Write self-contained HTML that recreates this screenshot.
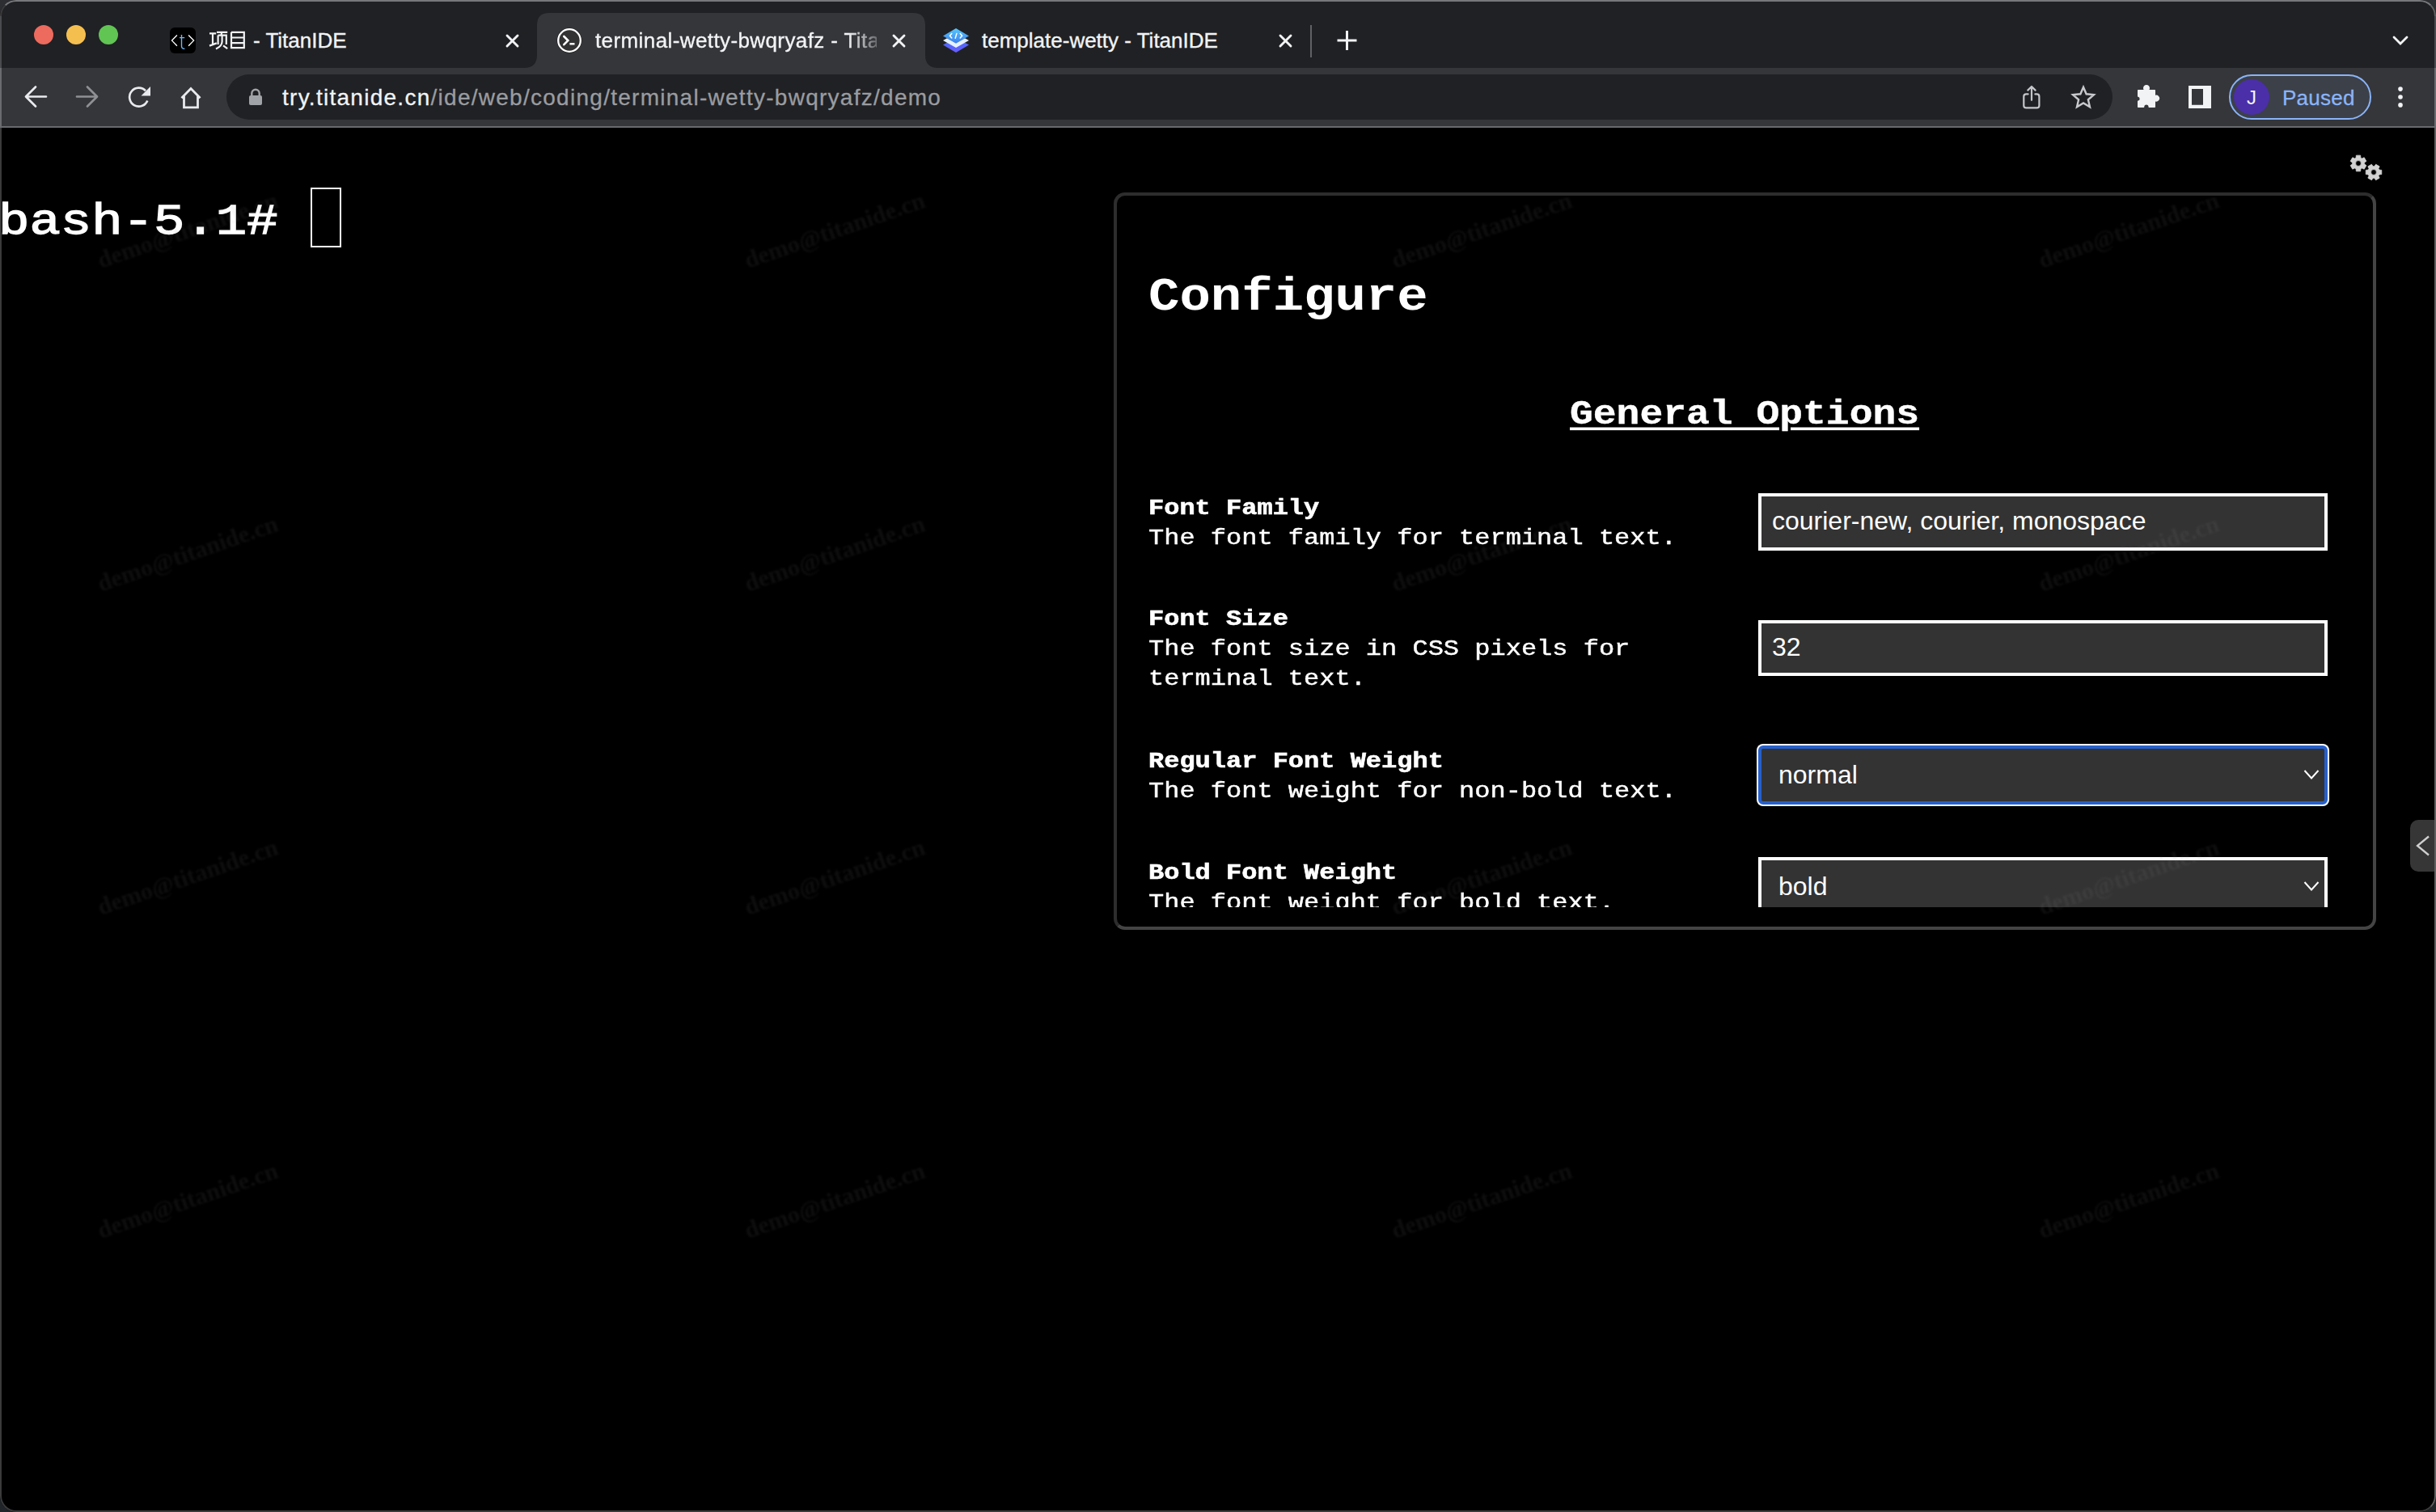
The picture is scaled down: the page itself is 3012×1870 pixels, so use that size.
<!DOCTYPE html>
<html><head><meta charset="utf-8">
<style>
*{box-sizing:border-box}
html,body{margin:0;padding:0;width:3012px;height:1870px;overflow:hidden;background:linear-gradient(#2d2e32 0,#2d2e32 60px,#20252a 1800px)}
body{position:relative;font-family:"Liberation Sans",sans-serif}
.abs{position:absolute}
#topline{left:0;top:0;width:3012px;height:2px;background:#7b7b7d}
#win{left:0;top:0;width:3012px;height:1870px;border-radius:20px;overflow:hidden;background:#000}
#tabstrip{left:0;top:0;width:3012px;height:84px;background:#202124}
#toolbar{left:0;top:84px;width:3012px;height:72px;background:#35363a}
#sep{left:0;top:156px;width:3012px;height:2px;background:#68696c}
#content{left:0;top:158px;width:3012px;height:1712px;background:#000;overflow:hidden}
#frame{left:0;top:0;width:3012px;height:1870px;border-radius:20px;border:2px solid;border-color:#77787b #5f5f5f #3b3b3b #3b3b3b;pointer-events:none}
.light{border-radius:50%;width:24px;height:24px;top:31px}
.tabtitle{font-size:26px;color:#f1f3f4;white-space:nowrap;line-height:30px;-webkit-text-stroke:0.35px #f1f3f4}
.url{font-size:28px;letter-spacing:1.27px;-webkit-text-stroke:0.3px currentColor;white-space:nowrap;line-height:32px}
.wm{font-family:"Liberation Serif",serif;font-size:30px;font-weight:bold;filter:blur(0.85px);color:rgba(150,150,150,0.095);white-space:nowrap;transform-origin:0 27px;transform:rotate(-19deg);line-height:32px;pointer-events:none}
.mono{font-family:"Liberation Mono",monospace;color:#fff;white-space:pre}
.sq{transform:scaleY(0.9)}
.s85{transform:scaleY(0.85)!important}
.rg{-webkit-text-stroke:0.5px #fff}
.bd{-webkit-text-stroke:0.7px #fff}
.inp{width:704px;background:#333;border:4px solid #fff;color:#fff;font-size:32px;padding-left:13px;display:flex;align-items:center;white-space:pre}
</style></head><body>
<div id="win" class="abs">
  <div id="tabstrip" class="abs">
    <div class="abs light" style="left:42px;background:#ed6a5e"></div>
    <div class="abs light" style="left:82px;background:#f5bf4f"></div>
    <div class="abs light" style="left:122px;background:#61c554"></div>

    <!-- tab1 -->
    <div class="abs" style="left:210px;top:34px;width:32px;height:32px;background:#000;border-radius:6px"></div>
    <svg class="abs" style="left:210px;top:34px" width="32" height="32" viewBox="0 0 32 32">
      <path d="M8.9 9.5 L2.5 16.1 L8.9 22.7" fill="none" stroke="#fff" stroke-width="1.35"/>
      <path d="M23.1 9.5 L29.6 16.1 L23.1 22.7" fill="none" stroke="#fff" stroke-width="1.35"/>
      <path d="M14.5 9 V23 Q14.5 26.4 18.4 26.4 M12 12.6 H18.2" fill="none" stroke="#72b6f2" stroke-width="1.4"/>
    </svg>
    <svg class="abs" style="left:258px;top:38px" width="46" height="24" viewBox="0 0 46 24">
      <g fill="none" stroke="#f1f3f4" stroke-width="2.2" stroke-linecap="butt">
        <path d="M1 3.3 H9.2 M5 3.3 V16.5 M1 18.6 L9.8 15.4"/>
        <path d="M10 1.8 H23.2 M16.4 1.8 L15.4 5.4 M11.6 5.6 H21.8 V17 M11.6 5.6 V17 M16.6 5.6 V13.5 Q16.5 19 9 22.6 M18 18.4 L23.2 22.2"/>
        <path d="M28 1.8 H43.8 V22.2 M28 1.8 V22.2 M28 8.5 H43.8 M28 15.2 H43.8 M28 21.2 H43.8"/>
      </g>
    </svg>
    <div class="abs tabtitle" style="left:313px;top:35px">- TitanIDE</div>
    <svg class="abs" style="left:624px;top:41px" width="19" height="19" viewBox="0 0 19 19"><path d="M3 3 L16 16 M16 3 L3 16" stroke="#f1f3f4" stroke-width="2.9" stroke-linecap="round"/></svg>
    <!-- active tab -->
    <svg class="abs" style="left:648px;top:16px" width="512" height="68" viewBox="0 0 512 68">
      <path d="M0 68 Q16 68 16 52 V15 Q16 0 31 0 H481 Q496 0 496 15 V52 Q496 68 512 68 Z" fill="#35363a"/>
    </svg>
    <svg class="abs" style="left:688px;top:34px" width="32" height="32" viewBox="0 0 32 32">
      <circle cx="16" cy="16" r="15.5" fill="#1e1e1e"/>
      <circle cx="16" cy="16" r="13.8" fill="#333" stroke="#fff" stroke-width="2.3"/>
      <path d="M9.3 11 L14.3 16.1 L9.3 21.2" fill="none" stroke="#fff" stroke-width="2.6" stroke-linecap="round"/>
      <path d="M16.4 20.3 H22.5" stroke="#fff" stroke-width="2.4"/>
    </svg>
    <div class="abs" style="left:736px;top:35px;width:348px;height:34px;overflow:hidden">
      <div class="tabtitle" style="letter-spacing:0.4px;-webkit-mask-image:linear-gradient(90deg,#000 312px,rgba(0,0,0,0.3) 348px)">terminal-wetty-bwqryafz - TitanIDE</div>
    </div>
    <svg class="abs" style="left:1102px;top:41px" width="19" height="19" viewBox="0 0 19 19"><path d="M3 3 L16 16 M16 3 L3 16" stroke="#f1f3f4" stroke-width="2.9" stroke-linecap="round"/></svg>
    <!-- tab3 -->
    <svg class="abs" style="left:1164px;top:33px" width="36" height="34" viewBox="0 0 36 34">
      <defs>
        <linearGradient id="g1" x1="0" y1="0" x2="0" y2="1"><stop offset="0" stop-color="#5ac8fa"/><stop offset="1" stop-color="#3a7ff0"/></linearGradient>
        <linearGradient id="g2" x1="0" y1="0" x2="0" y2="1"><stop offset="0" stop-color="#3d6ef5"/><stop offset="1" stop-color="#6b5cff"/></linearGradient>
      </defs>
      <path d="M2 22.5 L18 13.5 L34 22.5 L18 32 Z" fill="url(#g2)"/>
      <path d="M2 17 L7 14.2 L18 20.5 L29 14.2 L34 17 L18 26 Z" fill="#e4f0fc"/>
      <path d="M2 11.4 L18 2 L34 11.4 L18 20.6 Z" fill="url(#g1)"/>
      <path d="M12.8 8.6 L10.4 11.3 L12.8 14 M23.2 8.6 L25.6 11.3 L23.2 14 M18.9 8.4 L17.2 14.2" fill="none" stroke="#fff" stroke-width="1.5" stroke-linecap="round"/>
    </svg>
    <div class="abs tabtitle" style="left:1214px;top:35px">template-wetty - TitanIDE</div>
    <svg class="abs" style="left:1580px;top:41px" width="19" height="19" viewBox="0 0 19 19"><path d="M3 3 L16 16 M16 3 L3 16" stroke="#f1f3f4" stroke-width="2.9" stroke-linecap="round"/></svg>
    <div class="abs" style="left:1620px;top:31px;width:2px;height:40px;background:#5f6165"></div>
    <svg class="abs" style="left:1652px;top:37px" width="27" height="26" viewBox="0 0 27 26"><path d="M13.5 1 V25 M1.5 13 H25.5" stroke="#f1f3f4" stroke-width="3"/></svg>
    <svg class="abs" style="left:2956px;top:42px" width="24" height="16" viewBox="0 0 24 16"><path d="M4 4 L12 12 L20 4" fill="none" stroke="#f1f3f4" stroke-width="2.8" stroke-linecap="round"/></svg>
  </div>
  <div id="toolbar" class="abs">
    <svg class="abs" style="left:28px;top:20px" width="32" height="32" viewBox="0 0 32 32"><path d="M29 15.5 H4.5 M16 3.5 L4 15.5 L16 27.5" fill="none" stroke="#e8eaed" stroke-width="2.7" stroke-linecap="round" stroke-linejoin="round"/></svg>
    <svg class="abs" style="left:92px;top:20px" width="32" height="32" viewBox="0 0 32 32"><path d="M3 15.5 H27.5 M16 3.5 L28 15.5 L16 27.5" fill="none" stroke="#8e9094" stroke-width="2.7" stroke-linecap="round" stroke-linejoin="round"/></svg>
    <svg class="abs" style="left:156px;top:20px" width="32" height="32" viewBox="0 0 32 32"><path d="M26.3 20.5 A11.5 11.5 0 1 1 24 8.2" fill="none" stroke="#e8eaed" stroke-width="2.7"/><path d="M30 3 V14.6 H18.5 Z" fill="#e8eaed"/></svg>
    <svg class="abs" style="left:220px;top:20px" width="32" height="32" viewBox="0 0 32 32"><path d="M4.5 17.2 L16 5.5 L27.5 17.2 M7.5 14.2 V28.8 H24.5 V14.2" fill="none" stroke="#e8eaed" stroke-width="2.8" stroke-linejoin="miter"/></svg>
    <div class="abs" style="left:280px;top:8px;width:2332px;height:56px;border-radius:28px;background:#202124"></div>
    <svg class="abs" style="left:306px;top:24px" width="20" height="24" viewBox="0 0 20 24"><path d="M5.3 10 V7.5 A4.7 4.7 0 0 1 14.7 7.5 V10" fill="none" stroke="#a0a3a8" stroke-width="2.4"/><rect x="2" y="10" width="16" height="12" rx="2" fill="#a0a3a8"/></svg>
    <div class="abs url" style="left:349px;top:21px"><span style="color:#f1f3f4">try.titanide.cn</span><span style="color:#9a9ca0">/ide/web/coding/terminal-wetty-bwqryafz/demo</span></div>
    <svg class="abs" style="left:2498px;top:20px" width="28" height="32" viewBox="0 0 28 32"><path d="M9.6 12.4 H7.3 Q4.3 12.4 4.3 15.4 V26.4 Q4.3 29.4 7.3 29.4 H20.4 Q23.4 29.4 23.4 26.4 V15.4 Q23.4 12.4 20.4 12.4 H18.4 M14 19.8 V3.2 M9.3 7.6 L14 3 L18.6 7.6" fill="none" stroke="#c4c6c9" stroke-width="2.2" stroke-linecap="round" stroke-linejoin="round"/></svg>
    <svg class="abs" style="left:2558px;top:20px" width="36" height="32" viewBox="0 0 36 32"><path id="star" d="M18.00 3.70 L21.64 12.28 L30.93 13.10 L23.90 19.22 L25.99 28.30 L18.00 23.50 L10.01 28.30 L12.10 19.22 L5.07 13.10 L14.36 12.28 Z" fill="none" stroke="#c8cacd" stroke-width="2.4" stroke-linejoin="miter"/></svg>
    <svg class="abs" style="left:2640px;top:20px" width="34" height="32" viewBox="0 0 34 32"><path d="M3.7 7.7 H12.1 A3.3 3.3 0 1 1 15.9 7.7 H24.3 V15 A3.2 3.2 0 1 1 24.3 20.2 V28.2 H17.2 A3.3 3.3 0 0 0 10.6 28.2 H3.7 V21.3 A3.2 3.2 0 0 0 3.7 15 Z" fill="#f1f3f4" stroke="#f1f3f4" stroke-width="1.4" stroke-linejoin="round"/></svg>
    <svg class="abs" style="left:2704px;top:20px" width="32" height="32" viewBox="0 0 32 32"><path fill-rule="evenodd" d="M2 2 H30 V30 H2 Z M6 6 V25.7 H20 V6 Z" fill="#f1f3f4"/></svg>
    <div class="abs" style="left:2756px;top:8px;width:176px;height:56px;border-radius:28px;background:#3c4048;border:2px solid #8ab4f8"></div>
    <div class="abs" style="left:2762px;top:14px;width:44px;height:44px;border-radius:50%;background:#4a2fa8"></div>
    <div class="abs" style="left:2762px;top:14px;width:44px;height:44px;line-height:45px;text-align:center;color:#f1f3f4;font-size:24px">J</div>
    <div class="abs" style="left:2822px;top:21px;font-size:26px;letter-spacing:0.25px;line-height:32px;color:#8ab4f8;-webkit-text-stroke:0.3px #8ab4f8">Paused</div>
    <svg class="abs" style="left:2960px;top:20px" width="16" height="32" viewBox="0 0 16 32"><circle cx="8" cy="6.1" r="2.8" fill="#f1f3f4"/><circle cx="8" cy="16" r="2.8" fill="#f1f3f4"/><circle cx="8" cy="25.9" r="2.8" fill="#f1f3f4"/></svg>
  </div>
  <div id="sep" class="abs"></div>
  <div id="content" class="abs">
    <div class="abs mono" style="left:-2px;top:78px;font-size:64px;font-weight:normal;-webkit-text-stroke:1.5px #fff;color:#fff;line-height:73px;white-space:pre;transform:scaleY(0.85);transform-origin:0 53.5px">bash-5.1# </div>
    <div class="abs" style="left:384px;top:74px;width:38px;height:74px;border:2px solid #fff"></div>
  </div>
</div>
<div class="abs" style="left:1377px;top:238px;width:1561px;height:912px;border:4px solid;border-color:#2d2d2d #444 #444 #2d2d2d;border-radius:14px;background:#000"></div>
<div class="abs" style="left:1381px;top:242px;width:1553px;height:880px;overflow:hidden">
<div class="abs mono sq" style="left:39px;top:88px;font-size:64px;line-height:72px;font-weight:bold;transform-origin:0 53px;">Configure</div>
<div class="abs mono sq" style="left:560px;top:242px;font-size:48px;line-height:54px;font-weight:bold;-webkit-text-stroke:0.4px #fff;transform-origin:0 40px;text-decoration:underline;text-decoration-thickness:4px;text-underline-offset:5px">General Options</div>
<div class="abs mono sq s85 bd" style="left:39px;top:368px;font-size:32px;line-height:36px;font-weight:bold;transform-origin:0 27px;">Font Family</div>
<div class="abs mono sq s85 rg" style="left:39px;top:405px;font-size:32px;line-height:36px;transform-origin:0 27px;">The font family for terminal text.</div>
<div class="abs mono sq s85 bd" style="left:39px;top:505px;font-size:32px;line-height:36px;font-weight:bold;transform-origin:0 27px;">Font Size</div>
<div class="abs mono sq s85 rg" style="left:39px;top:542px;font-size:32px;line-height:36px;transform-origin:0 27px;">The font size in CSS pixels for</div>
<div class="abs mono sq s85 rg" style="left:39px;top:579px;font-size:32px;line-height:36px;transform-origin:0 27px;">terminal text.</div>
<div class="abs mono sq s85 bd" style="left:39px;top:681px;font-size:32px;line-height:36px;font-weight:bold;transform-origin:0 27px;">Regular Font Weight</div>
<div class="abs mono sq s85 rg" style="left:39px;top:718px;font-size:32px;line-height:36px;transform-origin:0 27px;">The font weight for non-bold text.</div>
<div class="abs mono sq s85 bd" style="left:39px;top:819px;font-size:32px;line-height:36px;font-weight:bold;transform-origin:0 27px;">Bold Font Weight</div>
<div class="abs mono sq s85 rg" style="left:39px;top:856px;font-size:32px;line-height:36px;transform-origin:0 27px;">The font weight for bold text.</div>
<div class="abs inp" style="left:793px;top:368px;height:71px;padding-bottom:2px">courier-new, courier, monospace</div>
<div class="abs inp" style="left:793px;top:525px;height:69px;padding-bottom:2px">32</div>
<div class="abs" style="left:791px;top:678px;width:708px;height:77px;border-radius:8px;background:#fff"></div>
<div class="abs inp sel" style="left:793px;top:680px;height:73px;border:4px solid #2660cc;border-radius:6px;padding-left:21px">normal</div>
<svg class="abs" style="left:1467px;top:709px" width="20" height="14" viewBox="0 0 20 14"><path d="M1.5 2 L10 11.5 L18.5 2" fill="none" stroke="#fff" stroke-width="2"/></svg>
<div class="abs inp sel" style="left:793px;top:818px;height:73px;padding-left:21px">bold</div>
<svg class="abs" style="left:1467px;top:847px" width="20" height="14" viewBox="0 0 20 14"><path d="M1.5 2 L10 11.5 L18.5 2" fill="none" stroke="#fff" stroke-width="2"/></svg>
</div>
<svg class="abs" style="left:2900px;top:185px" width="50" height="45" viewBox="2900 185 50 45">
<path fill-rule="evenodd" fill="#d2d2d2" stroke="#d2d2d2" stroke-width="0.8" stroke-linejoin="round" d="M2913.06 195.21 L2913.36 192.15 L2918.64 192.15 L2918.94 195.21 L2920.41 196.06 L2923.21 194.79 L2925.85 199.36 L2923.35 201.15 L2923.35 202.85 L2925.85 204.64 L2923.21 209.21 L2920.41 207.94 L2918.94 208.79 L2918.64 211.85 L2913.36 211.85 L2913.06 208.79 L2911.59 207.94 L2908.79 209.21 L2906.15 204.64 L2908.65 202.85 L2908.65 201.15 L2906.15 199.36 L2908.79 194.79 L2911.59 196.06 Z M2919.40 202 A3.4 3.4 0 1 0 2912.60 202 A3.4 3.4 0 1 0 2919.40 202 Z"/>
<path fill-rule="evenodd" fill="#d2d2d2" stroke="#d2d2d2" stroke-width="0.8" stroke-linejoin="round" d="M2935.85 205.65 L2937.61 203.24 L2942.14 205.86 L2940.94 208.59 L2941.79 210.06 L2944.76 210.39 L2944.76 215.61 L2941.79 215.94 L2940.94 217.41 L2942.14 220.14 L2937.61 222.76 L2935.85 220.35 L2934.15 220.35 L2932.39 222.76 L2927.86 220.14 L2929.06 217.41 L2928.21 215.94 L2925.24 215.61 L2925.24 210.39 L2928.21 210.06 L2929.06 208.59 L2927.86 205.86 L2932.39 203.24 L2934.15 205.65 Z M2938.40 213 A3.4 3.4 0 1 0 2931.60 213 A3.4 3.4 0 1 0 2938.40 213 Z"/>
</svg>
<div class="abs" style="left:2980px;top:1014px;width:34px;height:64px;border-radius:10px 0 0 10px;background:#363636"></div>
<svg class="abs" style="left:2984px;top:1030px" width="22" height="32" viewBox="0 0 22 32"><path d="M19 4.5 L5 16 L19 27.5" fill="none" stroke="#cfcfcf" stroke-width="2.3"/></svg>
<div class="abs wm" style="left:125px;top:306px">demo@titanide.cn</div>
<div class="abs wm" style="left:925px;top:306px">demo@titanide.cn</div>
<div class="abs wm" style="left:1725px;top:306px">demo@titanide.cn</div>
<div class="abs wm" style="left:2525px;top:306px">demo@titanide.cn</div>
<div class="abs wm" style="left:125px;top:706px">demo@titanide.cn</div>
<div class="abs wm" style="left:925px;top:706px">demo@titanide.cn</div>
<div class="abs wm" style="left:1725px;top:706px">demo@titanide.cn</div>
<div class="abs wm" style="left:2525px;top:706px">demo@titanide.cn</div>
<div class="abs wm" style="left:125px;top:1106px">demo@titanide.cn</div>
<div class="abs wm" style="left:925px;top:1106px">demo@titanide.cn</div>
<div class="abs wm" style="left:1725px;top:1106px">demo@titanide.cn</div>
<div class="abs wm" style="left:2525px;top:1106px">demo@titanide.cn</div>
<div class="abs wm" style="left:125px;top:1506px">demo@titanide.cn</div>
<div class="abs wm" style="left:925px;top:1506px">demo@titanide.cn</div>
<div class="abs wm" style="left:1725px;top:1506px">demo@titanide.cn</div>
<div class="abs wm" style="left:2525px;top:1506px">demo@titanide.cn</div>

<div id="frame" class="abs"></div>
<div class="abs" style="left:0;top:20px;width:2px;height:64px;background:#4a4b4f"></div>
<div class="abs" style="left:0;top:84px;width:2px;height:74px;background:#6a6b6e"></div>
<div class="abs" style="left:3010px;top:20px;width:2px;height:64px;background:#4a4b4f"></div>
<div class="abs" style="left:3010px;top:84px;width:2px;height:74px;background:#6a6b6e"></div>
</body></html>
